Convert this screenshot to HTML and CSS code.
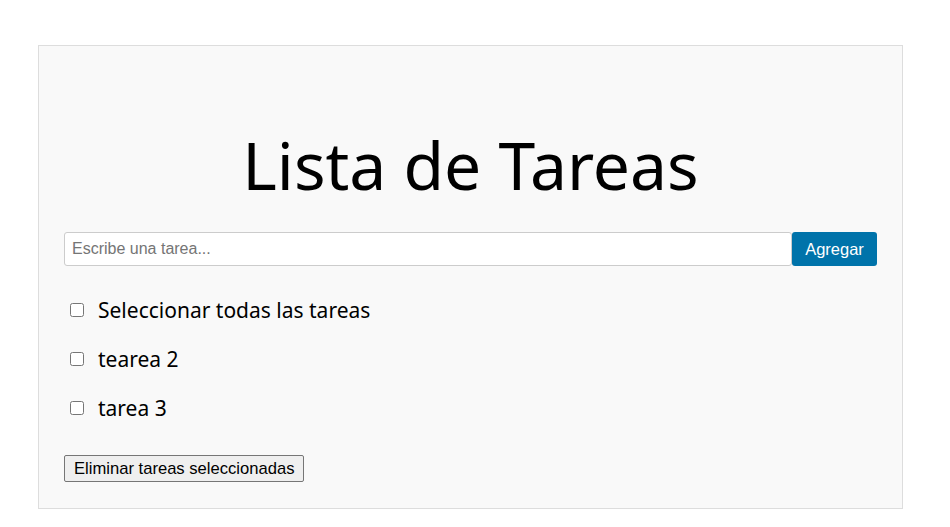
FILE: index.html
```html
<!DOCTYPE html>
<html lang="es">
<head>
<meta charset="utf-8">
<title>Lista de Tareas</title>
<link rel="stylesheet" href="styles.css">
</head>
<body>
<div class="container">
  <h1 class="title">Lista de Tareas</h1>
  <div class="add-row">
    <input class="task-input" type="text" placeholder="Escribe una tarea...">
    <button class="add-btn">Agregar</button>
  </div>
  <ul class="tasks">
    <li class="task"><input type="checkbox" class="check"><span>Seleccionar todas las tareas</span></li>
    <li class="task"><input type="checkbox" class="check"><span>tearea 2</span></li>
    <li class="task"><input type="checkbox" class="check"><span>tarea 3</span></li>
  </ul>
  <button class="delete-btn">Eliminar tareas seleccionadas</button>
</div>
</body>
</html>
```
FILE: styles.css
```css
html, body {
  margin: 0;
  padding: 0;
  background: #ffffff;
}
body {
  padding: 45px 0 0 38px;
  font-family: "Noto Sans", "Open Sans", sans-serif;
}
.container {
  width: 813px;
  padding: 0 25px 26px 25px;
  background: #f9f9f9;
  border: 1px solid #dddddd;
}
.title {
  margin: 0;
  padding-top: 82px;
  height: 104px;
  box-sizing: content-box;
  font-weight: 400;
  font-size: 66px;
  line-height: 72px;
  text-align: center;
  color: #000;
}
.add-row {
  display: flex;
  height: 34px;
}
.task-input {
  flex: 1;
  margin: 0;
  padding: 0 7px;
  height: 34px;
  box-sizing: border-box;
  border: 1px solid #cccccc;
  border-radius: 3px;
  font-family: "Liberation Sans", Arial, sans-serif;
  font-size: 16px;
  background: #fff;
}
.task-input::placeholder {
  color: #757575;
}
.add-btn {
  margin: 0;
  width: 85px;
  height: 34px;
  border: none;
  border-radius: 3px;
  background: #0073aa;
  color: #fff;
  font-family: "Liberation Sans", Arial, sans-serif;
  font-size: 16.5px;
}
.tasks {
  list-style: none;
  margin: 30px 0 0 0;
  padding: 0;
  display: flex;
  flex-direction: column;
  gap: 21px;
}
.task {
  display: flex;
  align-items: center;
  height: 28px;
  font-size: 21px;
  color: #000;
}
.check {
  width: 14px;
  height: 14px;
  margin: 0 14px 0 6px;
}
.delete-btn {
  margin-top: 33px;
  height: 27px;
  padding: 0 9px;
  font-family: "Liberation Sans", Arial, sans-serif;
  font-size: 16.6px;
  color: #000;
  background: #efefef;
  border: 1px solid #767676;
  border-radius: 2px;
}
```
